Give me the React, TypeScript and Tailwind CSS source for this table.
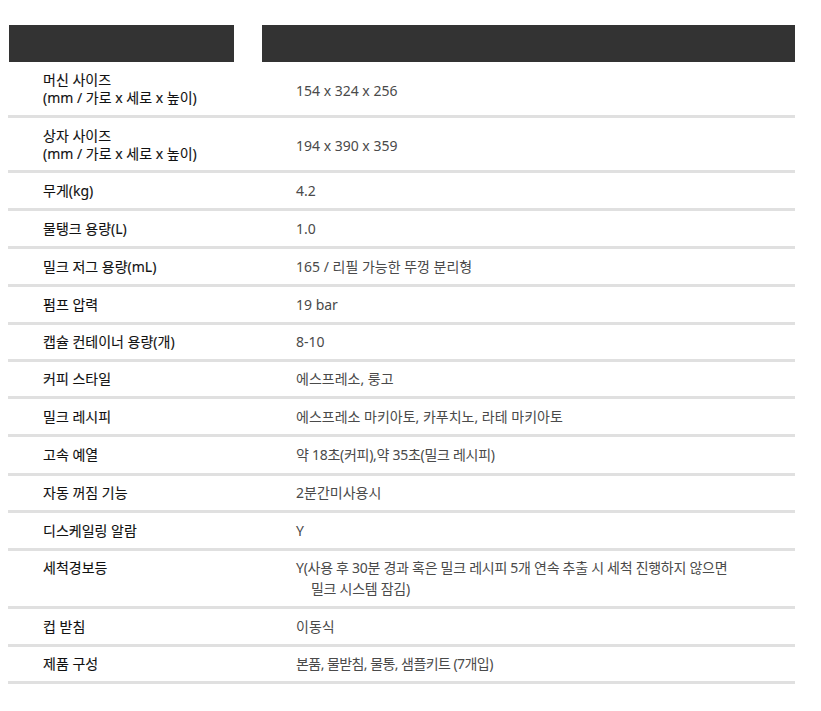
import React from "react";

type Row = {
  label: React.ReactNode;
  value: React.ReactNode;
  h: string;
  kind?: "two" | "wash";
};

const rows: Row[] = [
  {
    label: (
      <>
        <span className="block">머신 사이즈</span>
        <span className="block">(mm / 가로 x 세로 x 높이)</span>
      </>
    ),
    value: "154 x 324 x 256",
    h: "h-[56px]",
    kind: "two",
  },
  {
    label: (
      <>
        <span className="block">상자 사이즈</span>
        <span className="block">(mm / 가로 x 세로 x 높이)</span>
      </>
    ),
    value: "194 x 390 x 359",
    h: "h-[55px]",
    kind: "two",
  },
  { label: "무게(kg)", value: "4.2", h: "h-[38px]" },
  { label: "물탱크 용량(L)", value: "1.0", h: "h-[38px]" },
  { label: "밀크 저그 용량(mL)", value: "165 / 리필 가능한 뚜껑 분리형", h: "h-[38px]" },
  { label: "펌프 압력", value: "19 bar", h: "h-[38px]" },
  { label: "캡슐 컨테이너 용량(개)", value: "8-10", h: "h-[37px]" },
  { label: "커피 스타일", value: "에스프레소, 룽고", h: "h-[37px]" },
  { label: "밀크 레시피", value: "에스프레소 마키아토, 카푸치노, 라테 마키아토", h: "h-[38px]" },
  {
    label: "고속 예열",
    value: <span className="tracking-[-0.02em]">약 18초(커피),약 35초(밀크 레시피)</span>,
    h: "h-[39px]",
  },
  { label: "자동 꺼짐 기능", value: "2분간미사용시", h: "h-[37px]" },
  { label: "디스케일링 알람", value: "Y", h: "h-[38px]" },
  {
    label: "세척경보등",
    value: (
      <span className="tracking-[-0.02em]">
        <span className="block">Y(사용 후 30분 경과 혹은 밀크 레시피 5개 연속 추출 시 세척 진행하지 않으면</span>
        <span className="block pl-[15px]">밀크 시스템 잠김)</span>
      </span>
    ),
    h: "h-[58px]",
    kind: "wash",
  },
  { label: "컵 받침", value: "이동식", h: "h-[38px]" },
  {
    label: "제품 구성",
    value: <span className="tracking-[-0.04em]">본품, 물받침, 물통, 샘플키트 (7개입)</span>,
    h: "h-[37px]",
  },
];

export default function App() {
  return (
    <div
      className="w-[821px] h-[711px] bg-white pt-[25px] pl-[8px]"
      style={{ fontFamily: '"Noto Sans", "Noto Sans CJK KR", sans-serif' }}
    >
      <div className="w-[787px]">
        <div className="flex h-[37px]">
          <div className="ml-[1px] w-[225px] bg-[#333333]" />
          <div className="ml-[28px] flex-1 bg-[#333333]" />
        </div>
        {rows.map((r, i) => {
          const wash = r.kind === "wash";
          return (
            <div
              key={i}
              className={`grid grid-cols-[254px_1fr] border-b-[3px] border-[#e0e0e0] ${r.h} ${
                wash ? "items-start pt-[6px]" : "items-center"
              }`}
            >
              <div
                className={`pl-[35px] text-[14px] font-normal text-[#111111] [-webkit-text-stroke:0.12px_#111111] ${
                  r.kind === "two" ? "leading-[18px] pt-[1px]" : wash ? "leading-[21px]" : "leading-[20px]"
                }`}
              >
                {r.label}
              </div>
              <div
                className={`pl-[34px] text-[14px] font-normal text-[#4a4a4a] ${
                  wash ? "leading-[21px]" : r.kind === "two" ? "leading-[20px] pt-[4px]" : "leading-[20px]"
                }`}
              >
                {r.value}
              </div>
            </div>
          );
        })}
      </div>
    </div>
  );
}
